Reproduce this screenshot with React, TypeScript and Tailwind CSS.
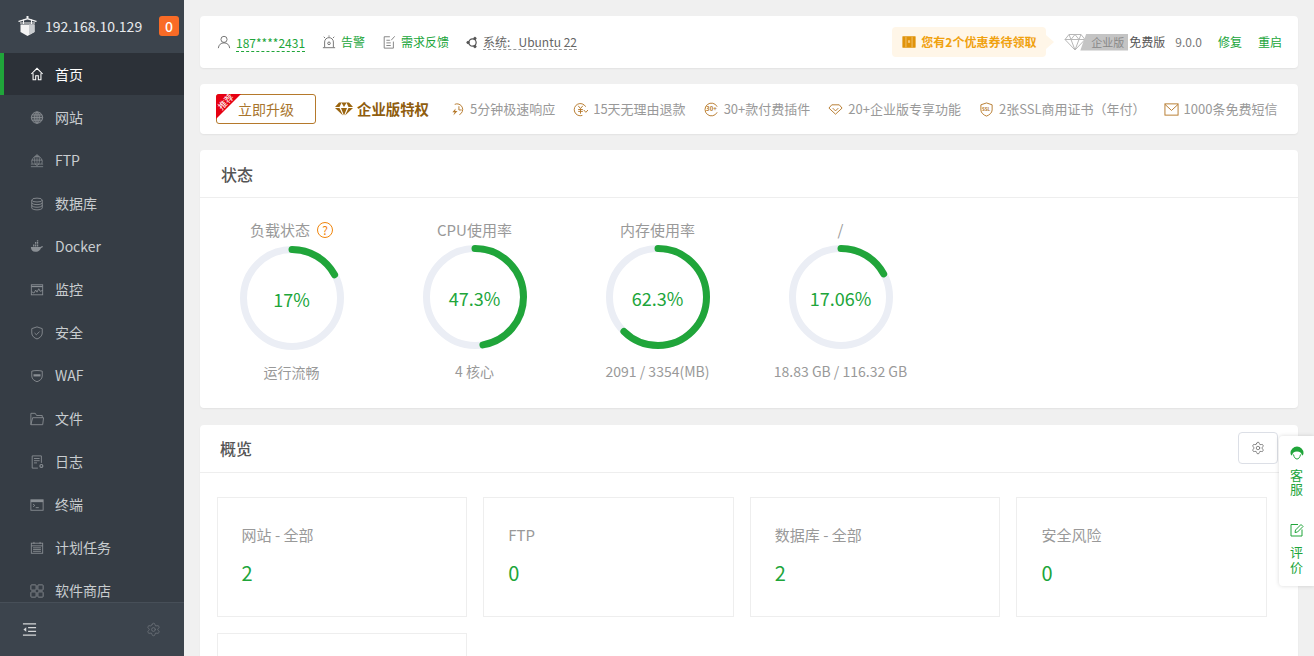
import React from "react";
import { Settings } from "lucide-react";

const font = { fontFamily: '"Noto Sans CJK SC", "Noto Sans", sans-serif' };

const S = ({ children, size = 16, className = "" }: { children: React.ReactNode; size?: number; className?: string }) => (
  <svg width={size} height={size} viewBox="0 0 16 16" fill="none" stroke="currentColor" strokeWidth="1" className={"shrink-0 " + className}>
    {children}
  </svg>
);

const icons: Record<string, React.ReactNode> = {
  home: <path d="M1.5 8 8 1.5 14.500 8M3.500 7v7.500h3V10h3v4.500h3V7" strokeWidth="1.2" />,
  globe: (
    <>
      <circle cx="8" cy="7.500" r="6.500" fill="currentColor" fillOpacity=".25" />
      <ellipse cx="8" cy="7.500" rx="2.700" ry="6.500" />
      <path d="M1.500 7.500h13M2.300 4.500h11.400M2.300 10.500h11.400M8 1v13" />
    </>
  ),
  ftp: (
    <>
      <path d="M2.500 11a6 6 0 1 1 11 0" strokeWidth=".9" />
      <ellipse cx="8" cy="7" rx="2.700" ry="6" strokeWidth=".8" />
      <path d="M2 7h12M8 1v10" strokeWidth=".8" />
      <path d="M1 11.500h14M1 14.500h14" strokeWidth=".9" />
    </>
  ),
  db: (
    <>
      <ellipse cx="8" cy="3.500" rx="6" ry="2.200" />
      <path d="M2 3.500v9c0 1.200 2.700 2.200 6 2.200s6-1 6-2.200v-9M2 6.500c0 1.200 2.700 2.200 6 2.200s6-1 6-2.200M2 9.500c0 1.200 2.700 2.200 6 2.200s6-1 6-2.200" />
    </>
  ),
  docker: (
    <>
      <path d="M1 8h11c.5-.8 1.500-1 3-.5-.5 1-1.400 1.400-2.400 1.500C11.500 12 9 13.500 6 13.500 3 13.500 1 11.500 1 8Z" fill="currentColor" stroke="none" />
      <path d="M3.500 5H5v2.500H3.500zM5.700 5h1.500v2.500H5.700zM7.900 5h1.500v2.500H7.900zM5.700 2.200h1.500v2.200H5.700zM7.900 2.200h1.500v2.200H7.900zM7.900.4h1.500v1.300H7.900z" fill="currentColor" stroke="none" />
    </>
  ),
  monitor: (
    <>
      <rect x="1.500" y="2" width="13" height="11.500" />
      <path d="M1.500 4h13" strokeWidth="1.500" />
      <path d="M2 10l2.500 1.500L6.500 8l1.500 2.500L10 6.500l1.500 3 3-1" />
    </>
  ),
  shield: (
    <>
      <path d="M8 1 14 3v5c0 3.500-3 5.800-6 6.800-3-1-6-3.300-6-6.800V3Z" />
      <path d="M5.200 8 7.300 10 11 6.300" />
    </>
  ),
  waf: (
    <>
      <path d="M2 2.500C5 1.500 11 1.500 14 2.500v5.500c0 3.500-3 5.500-6 6.500-3-1-6-3-6-6.500Z" />
      <path d="M4 6h8v2.500H4z" fill="currentColor" stroke="none" />
    </>
  ),
  folder: <path d="M1 14.500V1.500h5l1.500 2.500h6.500v2.500M1 14.500h13.500l1-8H3Z" />,
  log: (
    <>
      <path d="M13 9V1H2.500v14H9" />
      <path d="M4.500 4h6.500M4.500 6.500h6.500M4.500 9h3.500" />
      <circle cx="13" cy="12.500" r="1.700" strokeWidth="1.300" />
    </>
  ),
  term: (
    <>
      <rect x="1" y="2" width="14" height="12" />
      <path d="M1 3.500h14" strokeWidth="2.500" />
      <path d="m3.500 7 2 1.500-2 1.500M6.500 11H10" />
    </>
  ),
  cal: (
    <>
      <rect x="1.500" y="2.500" width="13" height="11.500" />
      <path d="M4.500 1v2.500M11.500 1v2.500M1.500 5.500h13M3.500 7.800h9M3.500 9.800h9M3.500 11.800h9" />
    </>
  ),
  apps: (
    <>
      <rect x="1" y="1" width="6" height="6" rx=".8" />
      <rect x="9" y="1" width="6" height="6" rx=".8" />
      <rect x="1" y="9" width="6" height="6" rx=".8" />
      <rect x="9" y="9" width="6" height="6" rx=".8" />
    </>
  ),
};

const menu: [string, string][] = [
  ["globe", "网站"],
  ["ftp", "FTP"],
  ["db", "数据库"],
  ["docker", "Docker"],
  ["monitor", "监控"],
  ["shield", "安全"],
  ["waf", "WAF"],
  ["folder", "文件"],
  ["log", "日志"],
  ["term", "终端"],
  ["cal", "计划任务"],
  ["apps", "软件商店"],
];

const Sidebar = () => (
  <aside className="w-[184px] h-full shrink-0 flex flex-col bg-[#363d45] overflow-hidden">
    <div className="h-[53px] shrink-0 bg-[#3c444d] flex items-center pl-[18px] pb-[1px]">
      <svg width="19" height="20" viewBox="0 0 19 20" className="shrink-0">
        <path d="M2.500 8.500h14V16L9.500 20l-7-4Z" fill="#f4f4f4" />
        <path d="M11 8.500h5.500V16L11 19Z" fill="#c9cccf" />
        <path d="M0 5 9.500 2 19 5l-1 1L9.500 3.500 1 6Z" fill="#f4f4f4" />
        <path d="M2 6.500h15v1H2zM8.500 0h2v2.500h-2zM5 3.500h1V8H5zM13 3.500h1V8h-1z" fill="#f4f4f4" />
      </svg>
      <span className="ml-[8px] text-[14px] text-[#e8eaec] leading-none w-[105px]">192.168.10.129</span>
      <span className="ml-[9px] w-5 h-5 rounded-[3px] bg-[#f96b26] text-white text-[14px] font-medium flex items-center justify-center leading-none">0</span>
    </div>
    <div className="flex-1 min-h-0 overflow-hidden">
      <div className="h-[42px] mb-[1px] bg-[#2c3138] border-l-[4px] border-[#20a53a] flex items-center pl-[26px] text-white">
        <S size={14}>{icons.home}</S>
        <span className="ml-[11px] text-[14px]">首页</span>
      </div>
      {menu.map(([k, label]) => (
        <div key={label} className="h-[43px] flex items-center pl-[30px] text-[#c9cdd0]">
          <span className="text-[#8a8f94] flex">
            <S size={14}>{icons[k]}</S>
          </span>
          <span className="ml-[11px] text-[14px]">{label}</span>
        </div>
      ))}
    </div>
    <div className="h-[54px] shrink-0 bg-[#3c444d] border-t border-[#474f58] flex items-center justify-between pl-[22px] pr-[23px]">
      <S size={15} className="text-[#d4d6d8]">
        <path d="M1 2h14M6.500 6h8.500M6.500 10h8.500M1 14h14" strokeWidth="1.500" />
        <path d="M4.500 5.500v5L1.500 8Z" fill="currentColor" stroke="none" />
      </S>
      <Settings size={15} strokeWidth={1.4} className="text-[#6b7178]" />
    </div>
  </aside>
);

const gold = "text-[#b5792b]";

const perks: [React.ReactNode, string, string][] = [
  [<><path d="M5 2.500a6 6 0 1 1 5 11" /><path d="M9.500 4.500v4h3" /><path d="M6 7 2.500 11h2.500l-1.500 3.500L8 9.500H5.500Z" fill="currentColor" stroke="none" /></>, "5分钟极速响应", "ml-[21px]"],
  [<><path d="M13.500 5A6.500 6.500 0 1 0 10 14.300" /><path d="M5.500 4l2.500 3L10.500 4M8 7v5.500M5.500 8h5M5.500 10h5M11.500 8.500l2.200 2.500L16 8.500" /></>, "15天无理由退款", "ml-[18px]"],
  [<><path d="M14 5A6.800 6.800 0 1 0 14 11" /><text x="2.200" y="10" fontSize="6.500" fontWeight="700" fill="currentColor" stroke="none">30+</text></>, "30+款付费插件", "ml-[18px]"],
  [<><path d="M4 3h8l3 3.500L8 13 1 6.500Z" /><path d="M5 6.500 8 9.500 11 6.500" /></>, "20+企业版专享功能", "ml-[18px]"],
  [<><path d="M8 1l6 2v5.500c0 3-3 5.500-6 6.500-3-1-6-3.500-6-6.500V3Z" /><text x="3.200" y="10" fontSize="4.800" fontWeight="700" fill="currentColor" stroke="none">SSL</text></>, "2张SSL商用证书（年付）", "ml-[18px]"],
  [<><rect x="1" y="2" width="14" height="12" /><path d="m1 2.500 7 6.500 7-6.500" /></>, "1000条免费短信", "ml-[18px]"],
];

const TopBar = () => (
  <section className="h-[52px] bg-white rounded-[4px] shadow-[0_1px_2px_rgba(0,0,0,0.06)] flex items-center pl-[17px] pr-[16px] text-[12px]">
    <span className="text-[#666] flex"><S size={14}><circle cx="8" cy="5" r="3.500" /><path d="M1.500 15c.5-4 3-6 6.500-6s6 2 6.500 6" /></S></span>
    <span className="ml-[5px] text-[#20a53a] border-b border-dashed border-[#20a53a] leading-[16px] translate-y-[1px]">187****2431</span>
    <span className="ml-[17px] text-[#666] flex"><S size={14}><path d="M3 14V8a5 5 0 0 1 10 0v6M1 14.500h14M8 .5v1.500M2 2l1.500 1.500M14 2l-1.500 1.500" /><circle cx="8" cy="9.500" r="1.500" /></S></span>
    <span className="ml-[5px] text-[#20a53a]">告警</span>
    <span className="ml-[17px] text-[#777] flex"><S size={14}><path d="M13 7.500V15H2.500V2H9M5 6h4M5 9h5M5 12h5M10.500 6 14.500 1.500" /></S></span>
    <span className="ml-[5px] text-[#20a53a]">需求反馈</span>
    <span className="ml-[17px] text-[#555] flex">
      <S size={13}><circle cx="8" cy="8" r="4.500" strokeWidth="1.500" /><circle cx="2.500" cy="8" r="1.500" fill="currentColor" /><circle cx="11" cy="3" r="1.500" fill="currentColor" /><circle cx="11" cy="13" r="1.500" fill="currentColor" /></S>
    </span>
    <span className="ml-[4px] text-[#666] border-b border-dashed border-[#999] leading-[15px]">系统:&nbsp;&nbsp;&nbsp;Ubuntu 22</span>
    <div className="ml-auto flex items-center">
      <div className="relative h-[30px] w-[154px] bg-[#fff6e8] rounded-[4px] flex items-center pl-[10px] text-[#f0a10e] font-bold">
        <span className="flex text-[#e0930b]"><S size={14}><rect x="1" y="2" width="14" height="12" fill="currentColor" /><path d="M4.500 2v12M11.500 2v12" stroke="#f6c777" /><rect x="6.800" y="6" width="2.500" height="3" fill="#f6c777" stroke="none" /></S></span>
        <span className="ml-[5px] whitespace-nowrap">您有2个优惠券待领取</span>
        <span className="absolute left-full top-[8px] w-0 h-0 border-y-[7px] border-y-transparent border-l-[8px] border-l-[#fff6e8]" />
      </div>
      <svg width="22" height="18" viewBox="0 0 22 18" className="ml-[18px] shrink-0 text-[#b8b8b8]" fill="none" stroke="currentColor">
        <path d="M5 1.500h12l4 5-10 10.500L1 6.500ZM1 6.500h20M7 6.500l4 10.500 4-10.500M5 1.500l2 5 4-5 4 5 2-5" />
      </svg>
      <span className="-ml-[6px] w-[48px] h-[17px] bg-[#c4c4c4] text-[#888] text-[11px] flex items-center justify-end pr-[4px] leading-none [clip-path:polygon(6px_0,100%_0,100%_100%,0_100%)]">企业版</span>
      <span className="ml-[1px] text-[#555]">免费版</span>
      <span className="ml-[10px] text-[#777]">9.0.0</span>
      <span className="ml-[16px] text-[#20a53a]">修复</span>
      <span className="ml-[16px] text-[#20a53a]">重启</span>
    </div>
  </section>
);

const Upgrade = () => (
  <section className="h-[50px] mt-[16px] bg-white rounded-[4px] shadow-[0_1px_2px_rgba(0,0,0,0.06)] flex items-center pl-[16px] whitespace-nowrap">
    <div className="relative w-[100px] h-[30px] rounded-[3px] border border-[#b5792b] flex items-center pl-[21px] text-[14px] text-[#a8742c]">
      立即升级
      <span className="absolute -left-px -top-px w-[25px] h-[25px] rounded-tl-[3px] bg-[#e60012] [clip-path:polygon(0_0,100%_0,0_100%)]" />
      <span className="absolute left-0 top-[1px] w-[18px] -rotate-45 text-white text-[9px] leading-[12px] text-center">推荐</span>
    </div>
    <span className="ml-[19px] text-[#9a6510] flex">
      <svg width="18" height="14" viewBox="0 0 18 14" fill="currentColor"><path d="M4 .5h10l4 4.500H13.500L11.500.8 9 5 6.500.8 4.500 5H0ZM0 6h4.500L8 13.500ZM18 6h-4.500L10 13.500ZM6 6h6l-3 7.500Z" /></svg>
    </span>
    <span className="ml-[4px] text-[14.400px] font-bold text-[#8f5d0e]">企业版特权</span>
    {perks.map(([ic, t, m]) => (
      <span key={t} className={"flex items-center " + m}>
        <span className={gold + " flex"}><S size={15}>{ic}</S></span>
        <span className="ml-[5px] text-[13px] text-[#999]">{t}</span>
      </span>
    ))}
  </section>
);

const Gauge = ({ title, pct, value, sub, help }: { title: string; pct: number; value: string; sub: string; help?: boolean }) => {
  const r = 48.5;
  const c = 2 * Math.PI * r;
  return (
    <div className="w-[183px] flex flex-col items-center">
      <div className="flex items-center gap-[7px] text-[15px] text-[#999] leading-[20px] whitespace-nowrap">
        {title}
        {help && (
          <span className="w-[16px] h-[16px] rounded-full border border-[#f0850c] text-[#f0850c] text-[12px] leading-[14px] text-center">?</span>
        )}
      </div>
      <div className={"relative w-[104px] h-[104px] " + (help ? "mt-[6px]" : "mt-[5px]")}>
        <svg width="104" height="104" viewBox="0 0 104 104" className="-rotate-90">
          <circle cx="52" cy="52" r={r} fill="none" stroke="#ebeef5" strokeWidth="7" />
          <circle cx="52" cy="52" r={r} fill="none" stroke="#20a53a" strokeWidth="7" strokeLinecap="round" strokeDasharray={`${(c * pct) / 100} ${c}`} />
        </svg>
        <span className="absolute inset-0 flex items-center justify-center text-[18px] text-[#20a53a] pt-[2px]">{value}</span>
      </div>
      <div className="mt-[12px] text-[14px] text-[#999] leading-[20px] whitespace-nowrap">{sub}</div>
    </div>
  );
};

const Status = () => (
  <section className="h-[258px] mt-[16px] bg-white rounded-[4px] shadow-[0_1px_2px_rgba(0,0,0,0.06)]">
    <div className="h-[48px] border-b border-[#eeeeee] flex items-center pl-[21px] pt-[1px] text-[16px] text-[#555] font-medium">状态</div>
    <div className="flex pt-[22px]">
      <Gauge title="负载状态" pct={17} value="17%" sub="运行流畅" help />
      <Gauge title="CPU使用率" pct={47.3} value="47.3%" sub="4 核心" />
      <Gauge title="内存使用率" pct={62.3} value="62.3%" sub="2091 / 3354(MB)" />
      <Gauge title="/" pct={17.06} value="17.06%" sub="18.83 GB / 116.32 GB" />
    </div>
  </section>
);

const Stat = ({ t, v }: { t: string; v: string }) => (
  <div className="h-[120px] border border-[#eeeeee] pl-[24px] pt-[25px]">
    <div className="text-[15px] text-[#999] leading-[24px]">{t}</div>
    <div className="mt-[12px] text-[20px] text-[#20a53a] leading-[28px]">{v}</div>
  </div>
);

const Overview = () => (
  <section className="relative mt-[17px] bg-white rounded-[4px] shadow-[0_1px_2px_rgba(0,0,0,0.06)]">
    <div className="h-[48px] border-b border-[#eeeeee] flex items-center justify-between pl-[20px] pr-[20px] pb-[2px] text-[16px] text-[#555] font-medium">
      概览
      <span className="w-[40px] h-[32px] border border-[#dcdfe6] rounded-[4px] text-[#666] flex items-center justify-center">
        <Settings size={14} strokeWidth={1.3} />
      </span>
    </div>
    <div className="grid grid-cols-4 gap-x-[16px] gap-y-[16px] pl-[16.600px] pr-[31px] pt-[24px] pb-[20px]">
      <Stat t="网站 - 全部" v="2" />
      <Stat t="FTP" v="0" />
      <Stat t="数据库 - 全部" v="2" />
      <Stat t="安全风险" v="0" />
      <Stat t="" v="" />
    </div>
  </section>
);

const Float = () => (
  <div className="absolute right-0 top-[436px] w-[35px] h-[150px] bg-white rounded-l-[4px] shadow-[0_0_4px_rgba(0,0,0,0.15)] flex flex-col items-center text-[#20a53a] text-[13px] leading-[14px] pt-[10px]">
    <svg width="14" height="16" viewBox="0 0 14 16" fill="currentColor">
      <path d="M7 .5a6.500 6.500 0 0 1 6.500 6.500c0 1.500-.7 2.500-1.500 2.500-.5-2.500-2-4-5-4s-4.500 1.500-5 4C1.200 9.500.5 8.500.5 7A6.500 6.500 0 0 1 7 .5Z" />
      <path d="M3.500 8.500C4 11.500 5.500 13 7 13s3-1.500 3.500-4.500" fill="none" stroke="currentColor" />
    </svg>
    <span className="mt-[6px] text-center w-[14px]">客服</span>
    <svg width="14" height="14" viewBox="0 0 14 14" fill="none" stroke="currentColor" className="mt-[27px]">
      <path d="M8 1.500H1V13h11V6.500M5 9.500l.5-2.500L11 1.500 13 3.500 7.500 9Z" />
    </svg>
    <span className="mt-[7px] text-center w-[14px] leading-[15px]">评价</span>
  </div>
);

export default function App() {
  return (
    <div style={font} className="relative w-[1314px] h-[656px] overflow-hidden flex bg-[#f0f0f0]">
      <Sidebar />
      <main className="flex-1 min-w-0 pl-[16px] pr-[16px] pt-[16px] overflow-hidden">
        <TopBar />
        <Upgrade />
        <Status />
        <Overview />
      </main>
      <Float />
    </div>
  );
}
